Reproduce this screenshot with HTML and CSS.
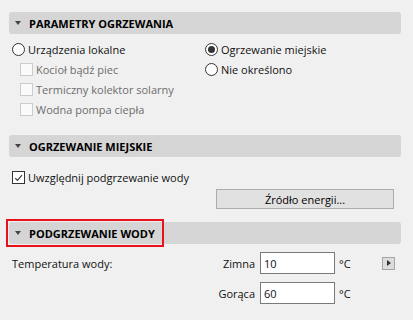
FILE: index.html
```html
<!DOCTYPE html>
<html lang="pl">
  <head>
    <meta charset="UTF-8" />
    <meta name="viewport" content="width=device-width, initial-scale=1.0" />
    <title>Ogrzewanie</title>
    <link rel="stylesheet" href="styles.css">
  </head>
  <body>
    <div class="panel">
      <div class="header"><span class="caret"></span>PARAMETRY OGRZEWANIA</div>
      <div class="options">
        <div class="left">
          <div class="row"><span class="radio"></span>Urządzenia lokalne</div>
          <div class="row sub disabled"><span class="box"></span>Kocioł bądź piec</div>
          <div class="row sub disabled"><span class="box"></span>Termiczny kolektor solarny</div>
          <div class="row sub disabled"><span class="box"></span>Wodna pompa ciepła</div>
        </div>
        <div class="right">
          <div class="row"><span class="radio on"></span>Ogrzewanie miejskie</div>
          <div class="row"><span class="radio"></span>Nie określono</div>
        </div>
      </div>

      <div class="header"><span class="caret"></span>OGRZEWANIE MIEJSKIE</div>
      <div class="city">
        <div class="row"><span class="box checked"><svg width="12" height="12" viewBox="0 0 12 12"><path d="M2.5 6.2 L4.8 8.6 L9.8 2.8" fill="none" stroke="#333" stroke-width="1.2"/></svg></span>Uwzględnij podgrzewanie wody</div>
        <button class="btn">Źródło energii...</button>
      </div>

      <div class="header"><span class="caret"></span>PODGRZEWANIE WODY<span class="mark"></span></div>
      <div class="temps">
        <div class="tlabel">Temperatura wody:</div>
        <div class="name">Zimna</div>
        <div class="field">10</div>
        <div class="unit">°C</div>
        <div class="arrow"></div>
        <div></div>
        <div class="name">Gorąca</div>
        <div class="field">60</div>
        <div class="unit">°C</div>
        <div></div>
      </div>
    </div>
  </body>
</html>
```

FILE: styles.css
```css
body {
  margin: 0;
  background-color: #f0f0f0;
  color: #111;
  font-family: 'Open Sans', 'Noto Sans', sans-serif;
  font-size: 11px;
}
.panel {
  padding: 12px 12px 0 9px;
}
.header {
  position: relative;
  height: 22px;
  background: #d5d5d5;
  border-radius: 3px;
  display: flex;
  align-items: center;
  font-weight: bold;
  font-size: 11px;
  color: #000;
}
.caret {
  width: 0;
  height: 0;
  margin: 0 8px 0 6px;
  border-left: 3.5px solid transparent;
  border-right: 3.5px solid transparent;
  border-top: 4px solid #444;
}
.mark {
  position: absolute;
  left: -3px;
  top: -3px;
  width: 154px;
  height: 24px;
  border: 2px solid #e8121c;
}
.options {
  display: grid;
  grid-template-columns: 193px 1fr;
  padding: 5px 0 0 3px;
  height: 84px;
  margin-bottom: 12px;
}
.row {
  height: 20px;
  display: flex;
  align-items: center;
}
.row.sub {
  padding-left: 8px;
}
.disabled {
  color: #6d6d6d;
}
.radio {
  box-sizing: border-box;
  width: 13px;
  height: 13px;
  border: 1px solid #333;
  border-radius: 50%;
  background: #fff;
  margin-right: 3px;
  display: flex;
  align-items: center;
  justify-content: center;
}
.radio.on::after {
  content: '';
  width: 7px;
  height: 7px;
  border-radius: 50%;
  background: #333;
}
.box {
  box-sizing: border-box;
  width: 13px;
  height: 13px;
  border: 1px solid #cccccc;
  background: #fafafa;
  margin-right: 3px;
  display: flex;
}
.box.checked {
  border-color: #333;
  background: #fff;
}
.city {
  display: flex;
  flex-direction: column;
  padding: 10px 0 13px 3px;
}
.btn {
  align-self: flex-end;
  box-sizing: border-box;
  width: 178px;
  height: 20px;
  margin: 2px 7px 0 0;
  background: #e1e1e1;
  border: 1px solid #adadad;
  font-family: inherit;
  font-size: 11px;
  color: #000;
  padding: 0;
}
.temps {
  display: grid;
  grid-template-columns: 178px 65px 80px 1fr 13px;
  grid-auto-rows: 22px;
  row-gap: 8px;
  align-items: center;
  padding: 8px 6px 0 3px;
}
.name {
  text-align: right;
}
.field {
  box-sizing: border-box;
  height: 22px;
  width: 75px;
  margin-left: 5px;
  background: #fff;
  border: 1px solid #7a7a7a;
  padding-left: 3px;
  display: flex;
  align-items: center;
}
.unit {
  padding-left: 4px;
}
.arrow {
  box-sizing: border-box;
  width: 13px;
  height: 13px;
  background: #dcdcdc;
  border: 1px solid #a5a5a5;
  display: flex;
  align-items: center;
  justify-content: center;
}
.arrow::after {
  content: '';
  border-top: 3.5px solid transparent;
  border-bottom: 3.5px solid transparent;
  border-left: 4px solid #333;
  margin-left: 1px;
}
```
